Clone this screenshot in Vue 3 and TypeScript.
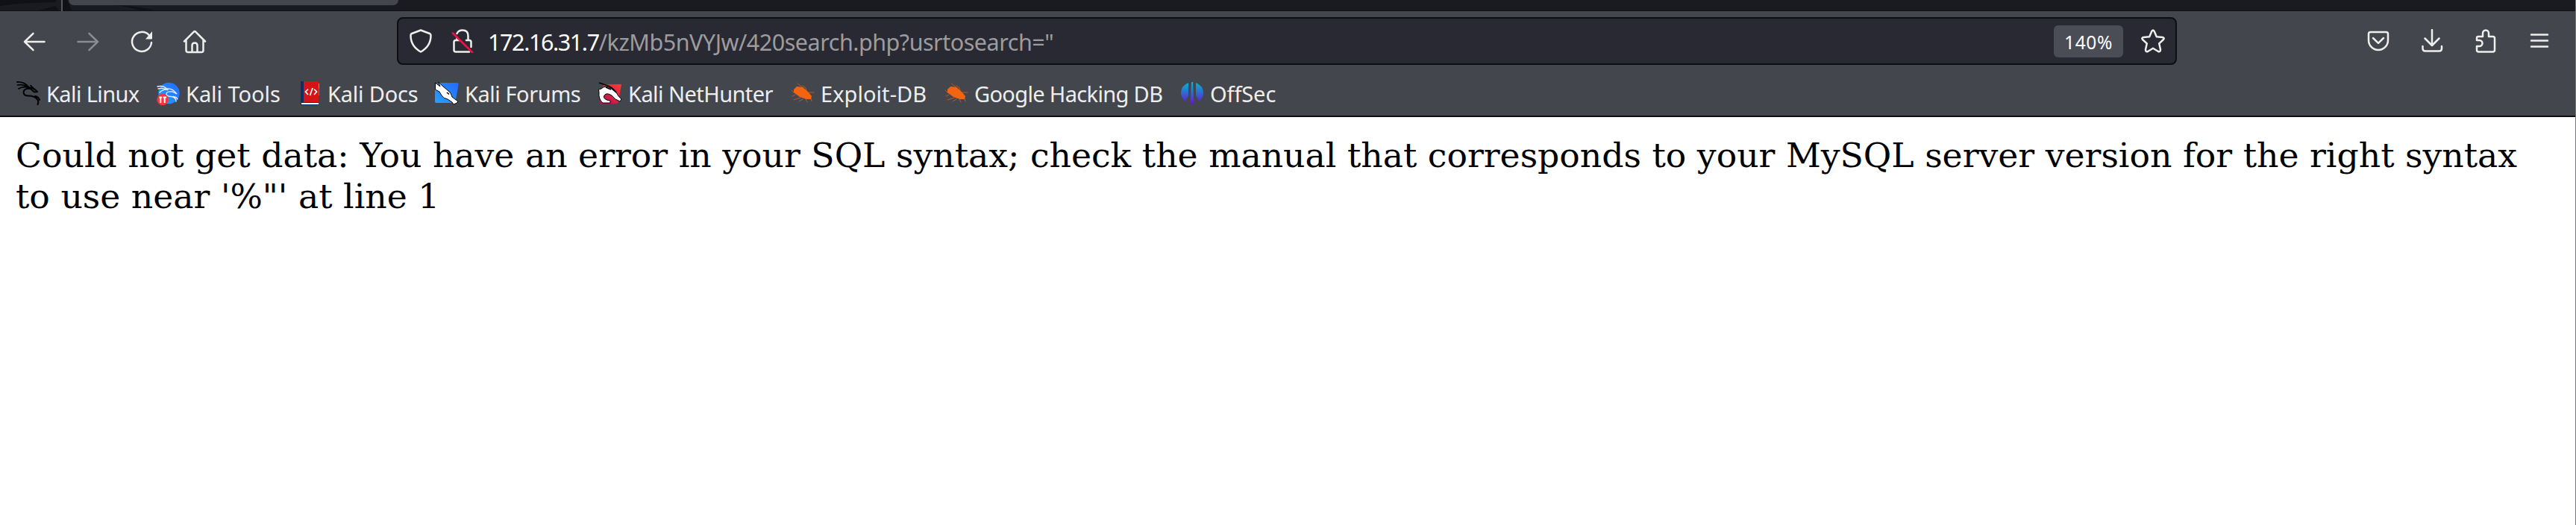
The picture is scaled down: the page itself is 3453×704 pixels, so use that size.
<script setup lang="ts">
interface Bookmark {
  id: string
  label: string
  spacing: string
}

const bookmarks: Bookmark[] = [
  { id: 'kali', label: 'Kali Linux', spacing: '-0.6px' },
  { id: 'tools', label: 'Kali Tools', spacing: '-0.05px' },
  { id: 'docs', label: 'Kali Docs', spacing: '-0.2px' },
  { id: 'forums', label: 'Kali Forums', spacing: '-0.45px' },
  { id: 'nethunter', label: 'Kali NetHunter', spacing: '-0.55px' },
  { id: 'exploit', label: 'Exploit-DB', spacing: '0.05px' },
  { id: 'exploit', label: 'Google Hacking DB', spacing: '-0.65px' },
  { id: 'offsec', label: 'OffSec', spacing: '-0.1px' },
]
const host = '172.16.31.7'
const path = '/kzMb5nVYJw/420search.php?usrtosearch="'
const message =
  'Could not get data: You have an error in your SQL syntax; check the manual that corresponds to your MySQL server version for the right syntax to use near \'%"\' at line 1'
</script>

<template>
  <div class="window">
    <header class="chrome">
      <div class="tabstrip">
        <svg width="250" height="15" viewBox="0 0 250 15">
          <path d="M0 0H75V3L40 4Q18 5 0 8Z" fill="#101115" />
          <path d="M48 15L74 8L80 15Z" fill="#101115" />
          <path d="M84 0H90L97 15H84Z" fill="#101115" />
          <path d="M160 7Q190 9 212 15H190Q176 10 158 7Z" fill="#101115" />
          <rect x="82" width="2" height="15" fill="#55575e" />
        </svg>
        <div class="tab"></div>
      </div>

      <div class="navbar">
        <div class="nav-buttons">
          <svg class="icon" viewBox="0 0 32 32"><path d="M29.500 16H3M14.500 4.800L3 16L14.500 27.200" /></svg>
          <svg class="icon dim" viewBox="0 0 32 32"><path d="M2.500 16H29M17.500 4.800L29 16L17.500 27.200" /></svg>
          <svg class="icon" viewBox="0 0 32 32">
            <path d="M26 7.500A13 13 0 1 0 29 17" />
            <path class="solid" d="M30 2V11.500Q30 12.500 29 12.500H21Z" />
          </svg>
          <svg class="icon home" viewBox="0 0 32 32">
            <path d="M2 15.500L14.800 2.700Q16 1.500 17.200 2.700L30 15.500M4.500 13.500V27.500Q4.500 30 7 30H25Q27.500 30 27.500 27.500V13.500M12.500 30V21Q12.500 17.500 16 17.500T19.500 21V30" />
          </svg>
        </div>

        <div class="urlbar">
          <svg class="icon shield" viewBox="0 0 32 32">
            <path d="M16 1.500L28 6Q29.500 6.600 29.500 8.500Q29.500 23 16 30.500Q2.500 23 2.500 8.500Q2.500 6.600 4 6Z" />
          </svg>
          <svg class="icon lock" viewBox="0 0 32 32">
            <path d="M8.500 6Q10.500 1.500 16 1.500Q23.500 1.500 23.500 9V14M8.500 15H7Q4.500 15 4.500 17.500V28Q4.500 30.500 7 30.500H25M21 15H25Q27.500 15 27.500 17.500V24M8.500 11V15H12" />
            <path class="slash" d="M3 5.500L29 31" />
          </svg>
          <div class="address"><span class="host">{{ host }}</span><span class="path">{{ path }}</span></div>
          <div class="zoom">140%</div>
          <svg class="icon star" viewBox="0 0 32 32">
            <path d="M14.500 2.600Q16 0.400 17.500 2.600L20.800 10.200L28.800 11Q31.800 11.700 30 14L24.200 19.300L26 27.500Q26 31 23 30L16 25.800L9 30Q6 31 6 27.500L7.800 19.300L2 14Q0.200 11.700 3.200 11L11.200 10.200Z" />
          </svg>
        </div>

        <div class="tools">
          <svg class="icon" viewBox="0 0 32 32">
            <path d="M5.500 4H26.500Q29 4 29 6.500V15A13 13 0 0 1 3 15V6.500Q3 4 5.500 4ZM9 12L16 18.800L23 12" />
          </svg>
          <svg class="icon" viewBox="0 0 32 32">
            <path d="M16 1V21.500M6.500 12.500L16 22L25.500 12.500M3.500 23V26Q3.500 29.500 7 29.500H25.500Q29 29.500 29 26V23" />
          </svg>
          <svg class="icon" viewBox="0 0 32 32">
            <path d="M6 10H12V5.500A4 4 0 0 1 20 5.500V10H25.500Q28 10 28 12.500V28Q28 30.500 25.500 30.500H6.500Q4 30.500 4 28V23H7.500A4 4 0 0 0 7.500 15H4V12Q4 10 6 10Z" />
          </svg>
          <svg class="icon" viewBox="0 0 32 32"><path d="M5 7.500H27M5 15.500H27M5 23.500H27" /></svg>
        </div>
      </div>

      <nav class="bookmarks">
        <div v-for="(b, i) in bookmarks" :key="i" class="bookmark">
          <svg class="favicon" width="32" height="32" viewBox="0 0 32 32">
            <defs>
              <linearGradient id="blue" x1="1" y1="0" x2="0" y2="1"><stop stop-color="#2468ff" /><stop offset="1" stop-color="#26a2ff" /></linearGradient>
              <linearGradient id="red" x1="1" y1="0" x2="0" y2="1"><stop stop-color="#ff3a34" /><stop offset="1" stop-color="#a80f56" /></linearGradient>
              <linearGradient id="violet" gradientUnits="userSpaceOnUse" x1="0" y1="1" x2="0" y2="30"><stop stop-color="#00b9cf" /><stop offset="1" stop-color="#6517d2" /></linearGradient>
            </defs>
            <g v-if="b.id === 'kali'" fill="none" stroke="#000" stroke-linecap="round" stroke-linejoin="round">
              <path stroke-width="1.700" d="M0.500 1Q10 0.500 16 7M1.500 5Q9 3.500 15 7.500M3 10Q8 6.500 15 8M19 5.500L24 10.500" />
              <path stroke-width="2" d="M15 8Q22 7.500 28 14L24 14.500L19 10Q10 9 9.500 14.500Q9.500 19.500 16 19.500Q25 19.500 28.500 25Q30 27.500 28.500 31M25 20Q29.500 20.500 31 25" />
            </g>
            <g v-else-if="b.id === 'tools'" fill="none" stroke-linecap="round">
              <circle cx="17.500" cy="16" r="14.200" fill="url(#blue)" />
              <path stroke="#e4efff" stroke-width="1.300" d="M2 7Q11 5 15 11M3 10Q9 8.500 15 11M5 15Q10 10 16 11.500M15 10Q22 9 28 17L22 14Q14 13 14 17Q14 20 20 20.500Q27 21 27 27M23 20.500Q28 21 29 24" />
              <circle cx="9" cy="24.500" r="7.700" fill="#fa3538" />
              <path stroke="#fff" stroke-width="1.900" stroke-linecap="butt" d="M4.500 21.500H8M6.300 21V29M9.500 21.500H14M11.700 21V29" />
            </g>
            <g v-else-if="b.id === 'docs'">
              <path fill="#ff8412" d="M25 3H29V9H25Z" />
              <path fill="#13a394" d="M25 9H29V19H25Z" />
              <rect x="4" y="0" width="24" height="32" fill="#122c66" />
              <path fill="#d41416" d="M8 0H28V28H8Z" />
              <path fill="#fff" d="M5 29H28V31H5Z" />
              <path fill="none" stroke="#fff" stroke-width="1.700" d="M14 10.500L10.500 14L14 18M22 10.500L25.500 14L22 18M20 9L16.500 19" />
            </g>
            <g v-else-if="b.id === 'forums'">
              <path fill="url(#blue)" d="M4 2H30Q32 2 31.700 4L27.500 27Q27 29 25 29H2Q0 29 0 27V6Z" />
              <path fill="#fff" stroke="#000" stroke-width="1" stroke-linejoin="round" d="M0.500 2L7 7L4.500 1L11 7L17 12Q22 15 23 21L31 27L29.500 29L25 31L23 28L17 24Q11 23 9 19L6 14L0.500 11Z" />
              <path stroke="#000" stroke-width="1.500" d="M16 15L19 17.500" />
            </g>
            <g v-else-if="b.id === 'nethunter'">
              <path fill="url(#red)" d="M7 4H31L27 27Q26.500 30 23 30H4Q1 29 1 26Z" />
              <path fill="#fff" stroke="#000" stroke-width="1" stroke-linejoin="round" d="M6 29Q0 24 1 15L0.500 11L4 10Q9 5 16 9L24 15Q27 21 31 24L29 27L23 24L18 19Q10 14 7.500 20Q7 25 16 26V29Z" />
              <path fill="none" stroke="#000" stroke-width="1.800" d="M1 2L10 5Q18 7 24 15M10 8L17 11" />
            </g>
            <g v-else-if="b.id === 'exploit'" stroke="#f26411" stroke-linecap="round">
              <path fill="#f26411" stroke="none" d="M4 11L8 7L16 8L23 14L28 20L27 24L21 24L12 21L4 15Z" />
              <path fill="none" stroke-width="0.900" opacity="0.750" d="M9 3L17 9M16 6L20 9L21 13M24 15L31 15M1 12L4 15M6 18L2 20M13 22L4 25M16 24L11 27M20 24L22 28M27 23L28 27" />
            </g>
            <g v-else fill="url(#violet)">
              <path d="M11 2V19L7 27Q1 22 1 16Q1 6 11 2Z" />
              <path d="M21 2V19L25 27Q31 22 31 16Q31 6 21 2Z" />
              <path d="M15 1H17L18.500 30.500H13.500Z" />
            </g>
          </svg>
          <span :style="{ letterSpacing: b.spacing }">{{ b.label }}</span>
        </div>
      </nav>
    </header>
    <main class="page">{{ message }}</main>
  </div>
</template>

<style>
body { margin: 0; }
</style>

<style scoped>
.window {
  width: 3453px;
  height: 704px;
  box-sizing: border-box;
  border-right: 1px solid #77787b;
  background: #fff;
  overflow: hidden;
}
.chrome {
  height: 157px;
  box-sizing: border-box;
  background: #44464d;
  border-bottom: 2px solid #0d0e11;
  font-family: "Noto Sans", sans-serif;
  color: #eeeeec;
}
.tabstrip {
  display: flex;
  height: 15px;
  box-sizing: border-box;
  background: #1a1b20;
  border-bottom: 1px solid #111216;
}
.tabstrip svg { flex: none; }
.tab {
  width: 442px;
  height: 7px;
  margin-left: -158px;
  border-radius: 0 0 7px 7px;
  background: #44464d;
}
.navbar {
  display: flex;
  align-items: center;
  height: 80px;
}
.nav-buttons {
  display: flex;
  gap: 40px;
  width: 502px;
  padding: 2px 0 0 30px;
}
.home { margin-left: -1px; }
.icon {
  flex: none;
  width: 32px;
  height: 32px;
  fill: none;
  stroke: #eeeeec;
  stroke-width: 2.500;
  stroke-linecap: round;
  stroke-linejoin: round;
}
.icon.dim { stroke: #8b8c8f; }
.icon .solid { fill: #eeeeec; stroke: none; }
.icon .slash { stroke: #ed1144; stroke-width: 2.800; }
.urlbar {
  display: flex;
  align-items: center;
  width: 2386px;
  height: 64px;
  box-sizing: border-box;
  padding-left: 14px;
  border: 2px solid #0d0e11;
  border-radius: 8px;
  background: #282933;
}
.lock { margin-left: 24px; }
.address {
  flex: 1;
  margin-left: 18px;
  padding-top: 2px;
  font-size: 30.500px;
  line-height: 42px;
  white-space: nowrap;
  color: #fff;
}
.host { letter-spacing: -1.400px; }
.path { letter-spacing: -0.480px; color: #9c9c9f; }
.zoom {
  width: 93px;
  height: 43px;
  margin-right: 24px;
  border-radius: 6px;
  background: #4a4c56;
  color: #fff;
  font-size: 24.500px;
  line-height: 45px;
  letter-spacing: 0.600px;
  text-align: center;
}
.star { margin-right: 14px; }
.tools {
  display: flex;
  gap: 40px;
  padding: 0 0 0 254px;
}
.bookmarks {
  display: grid;
  grid-template-columns: 187px 190px 184px 219px 258px 206px 316px auto;
  height: 60px;
  padding-left: 22px;
}
.bookmark {
  display: flex;
  align-items: center;
  gap: 8px;
  height: 60px;
  font-size: 29px;
  line-height: 60px;
  white-space: nowrap;
}
.bookmark span { padding-top: 2px; }
.favicon { flex: none; }
.page {
  padding: 24px 21px;
  font-family: "DejaVu Serif", serif;
  font-size: 45.700px;
  line-height: 55px;
  color: #000;
}
</style>
